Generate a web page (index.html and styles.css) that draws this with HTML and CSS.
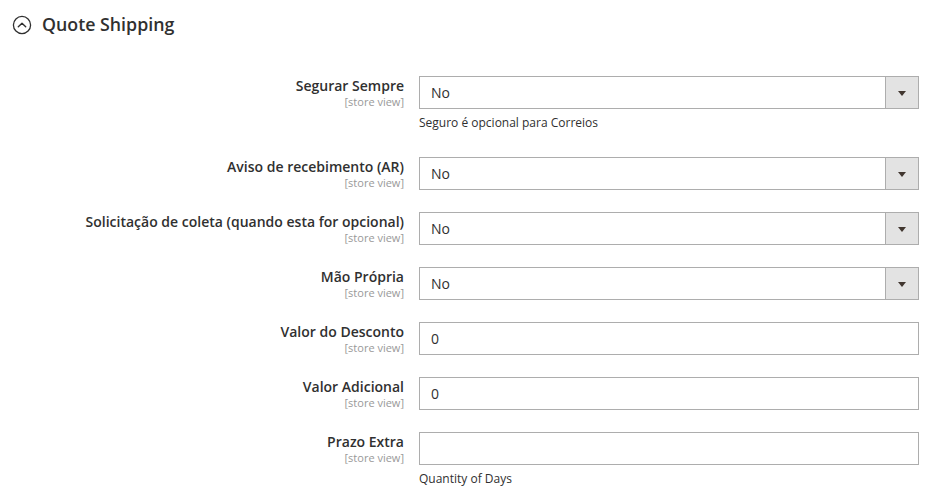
FILE: index.html
```html
<!DOCTYPE html>
<html lang="pt">
<head>
<meta charset="utf-8">
<title>Quote Shipping</title>
<link rel="stylesheet" href="styles.css">
</head>
<body>
<div class="section">
  <div class="section-title">
    <svg class="toggle-icon" width="20" height="20" viewBox="0 0 20 20" aria-hidden="true">
      <circle cx="10" cy="10" r="8.6" fill="none" stroke="#303030" stroke-width="1.3"/>
      <path d="M6.3 11.8 L10 8.2 L13.7 11.8" fill="none" stroke="#303030" stroke-width="1.4" stroke-linecap="round" stroke-linejoin="round"/>
    </svg>
    <span>Quote Shipping</span>
  </div>

  <div class="fields">
    <div class="field">
      <div class="label"><span class="label-text">Segurar Sempre</span><span class="scope">[store view]</span></div>
      <div class="control">
        <div class="select"><span class="value">No</span><span class="select-btn"><span class="arrow"></span></span></div>
        <div class="note">Seguro é opcional para Correios</div>
      </div>
    </div>

    <div class="field">
      <div class="label"><span class="label-text">Aviso de recebimento (AR)</span><span class="scope">[store view]</span></div>
      <div class="control">
        <div class="select"><span class="value">No</span><span class="select-btn"><span class="arrow"></span></span></div>
      </div>
    </div>

    <div class="field">
      <div class="label"><span class="label-text">Solicitação de coleta (quando esta for opcional)</span><span class="scope">[store view]</span></div>
      <div class="control">
        <div class="select"><span class="value">No</span><span class="select-btn"><span class="arrow"></span></span></div>
      </div>
    </div>

    <div class="field">
      <div class="label"><span class="label-text">Mão Própria</span><span class="scope">[store view]</span></div>
      <div class="control">
        <div class="select"><span class="value">No</span><span class="select-btn"><span class="arrow"></span></span></div>
      </div>
    </div>

    <div class="field">
      <div class="label"><span class="label-text">Valor do Desconto</span><span class="scope">[store view]</span></div>
      <div class="control">
        <input class="input" type="text" value="0">
      </div>
    </div>

    <div class="field">
      <div class="label"><span class="label-text">Valor Adicional</span><span class="scope">[store view]</span></div>
      <div class="control">
        <input class="input" type="text" value="0">
      </div>
    </div>

    <div class="field">
      <div class="label"><span class="label-text">Prazo Extra</span><span class="scope">[store view]</span></div>
      <div class="control">
        <input class="input" type="text" value="">
        <div class="note">Quantity of Days</div>
      </div>
    </div>
  </div>
</div>
</body>
</html>
```

FILE: styles.css
```css
* { box-sizing: border-box; }

html, body {
  margin: 0;
  padding: 0;
  background: #ffffff;
}

body {
  font-family: "Open Sans", "Noto Sans", sans-serif;
  color: #303030;
  width: 948px;
  height: 495px;
  overflow: hidden;
}

.section-title {
  display: flex;
  align-items: center;
  padding: 12px 0 0 12px;
  height: 36px;
  font-size: 17.8px;
  font-weight: 600;
  line-height: 24px;
  color: #303030;
}

.toggle-icon {
  display: block;
  margin-right: 10px;
  margin-top: 1px;
}

.fields {
  display: flex;
  flex-direction: column;
  gap: 22px;
  padding-top: 40px;
}

.field {
  display: grid;
  grid-template-columns: 404px 500px;
  column-gap: 15px;
}

.label {
  display: flex;
  flex-direction: column;
  align-items: flex-end;
  text-align: right;
}

.label-text {
  font-size: 14px;
  font-weight: 600;
  line-height: 19px;
  color: #303030;
}

.scope {
  font-size: 11px;
  line-height: 13px;
  color: #999999;
}

.control {
  display: flex;
  flex-direction: column;
}

.select {
  display: flex;
  align-items: center;
  height: 33px;
  border: 1px solid #adadad;
  background: #ffffff;
}

.select .value {
  flex: 1;
  padding-left: 11px;
  font-size: 14px;
  line-height: 18px;
  color: #303030;
}

.select-btn {
  display: flex;
  align-items: center;
  justify-content: center;
  width: 33px;
  height: 100%;
  background: #e3e3e3;
  border-left: 1px solid #adadad;
}

.arrow {
  width: 0;
  height: 0;
  border-left: 4px solid transparent;
  border-right: 4px solid transparent;
  border-top: 5px solid #41362f;
  margin-top: 1px;
}

.input {
  display: block;
  width: 500px;
  height: 33px;
  margin: 0;
  border: 1px solid #adadad;
  border-radius: 0;
  padding: 0 11px;
  font-family: "Open Sans", "Noto Sans", sans-serif;
  font-size: 14px;
  color: #303030;
  background: #ffffff;
  outline: none;
}

.note {
  font-size: 12px;
  line-height: 17px;
  padding-top: 5px;
  margin-bottom: 4px;
  color: #303030;
}
```
